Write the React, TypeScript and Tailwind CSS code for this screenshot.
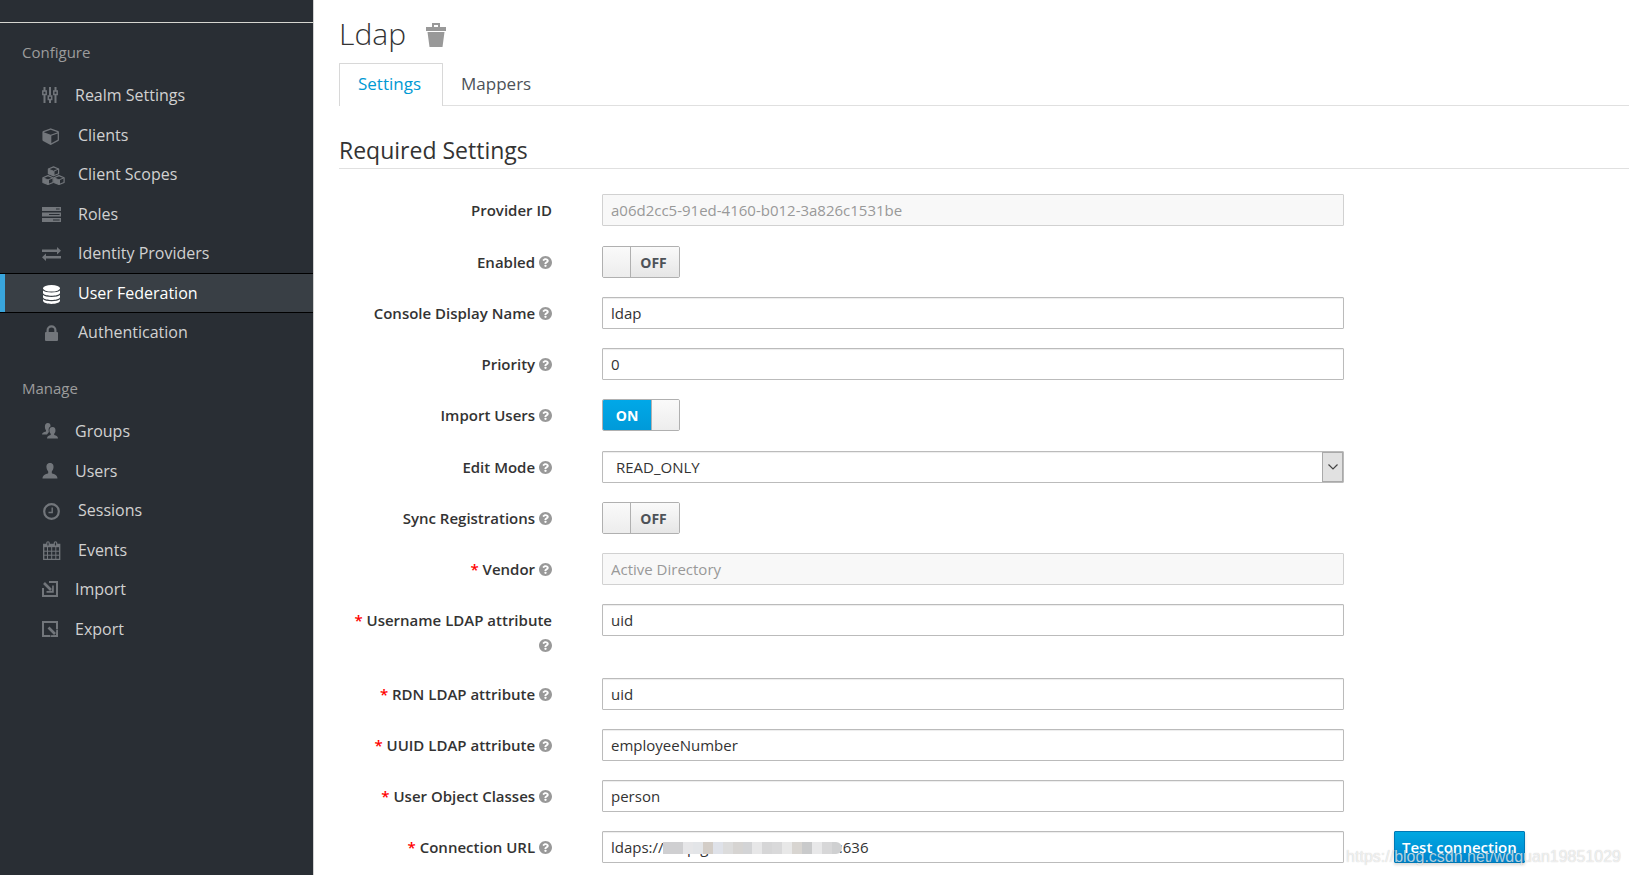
import { useState, type ReactNode } from 'react'
import clsx from 'clsx'
import { FaQuestionCircle } from 'react-icons/fa'

const icons: Record<string, ReactNode> = {
  sliders: (
    <svg width="16" height="16" viewBox="0 0 16 16" fill="none" stroke="currentColor" strokeWidth="2">
      <path d="M2.5 0v4M2.5 8v8M8 0v8.500M8 13v3M13.500 0v4M13.500 8v8" />
      <path strokeWidth="1.500" d="M.8 4h3.400v3.500H.8zM6.300 9h3.400v3.500H6.300zM11.800 4h3.400v3.500h-3.400z" />
    </svg>
  ),
  cube: (
    <svg width="18" height="18" viewBox="128 -10 1600 1812" fill="currentColor">
      <path d="M896 1629l640-349v-636l-640 233v752zM832 764l698-254-698-254-698 254zM1664 512v768q0 35-18 65t-49 47l-704 384q-28 16-61 16t-61-16l-704-384q-31-17-49-47t-18-65v-768q0-40 23-73t61-47l704-256q22-8 44-8t44 8l704 256q38 14 61 47t23 73z" transform="translate(64 0)" />
    </svg>
  ),
  cubes: (
    <svg width="23" height="19" viewBox="0 0 23 19" fill="currentColor" stroke="currentColor" strokeLinejoin="round">
      {['translate(5.500 0)', 'translate(0 8.700)', 'translate(11 8.700)'].map(t => (
        <g key={t} transform={t}>
          <path fill="none" strokeWidth="1.200" d="M.9 3 6 .9 11.100 3v4.800L6 9.800.9 7.800z" />
          <path stroke="none" d="M1 3.200 6 5.200v4.700L1 7.800zM6 5.200l1-.4v4.700l-1 .4z" />
          <path fill="none" strokeWidth="1" d="M1 3.100 6 5.200l5-2.100" />
        </g>
      ))}
    </svg>
  ),
  tasks: (
    <svg width="19" height="15" viewBox="0 0 19 15" fill="currentColor">
      <path fillRule="evenodd" d="M0 0h19v4H0zM14 1.400h3.600v1.200H14zM0 5.500h19v4H0zM7 6.900h10.600v1.200H7zM0 11h19v4H0zM11 12.400h6.600v1.200H11z" />
    </svg>
  ),
  exchange: (
    <svg width="19" height="14" viewBox="0 0 19 14" fill="currentColor">
      <path d="M0 2.500h15V0l4 3.800-4 3.700V5H0zM19 9H4V6.500L0 10.200 4 14v-2.500h15z" />
    </svg>
  ),
  database: (
    <svg width="19" height="19" viewBox="-1 0 19 19" fill="currentColor">
      <ellipse cx="8.500" cy="3.300" rx="8.500" ry="3.300" />
      <path d="M0 5.500c2 2.500 15 2.500 17 0V8c-1 3.700-16 3.700-17 0zM0 10c2 2.500 15 2.500 17 0v2.300c-1 3.700-16 3.700-17 0zM0 14.300c2 2.500 15 2.500 17 0v1.500c-1 4.200-16 4.200-17 0z" />
    </svg>
  ),
  lock: (
    <svg width="19" height="16" viewBox="0 0 19 16" fill="currentColor">
      <rect x="3" y="7" width="13" height="9" rx="1" />
      <path fill="none" stroke="currentColor" strokeWidth="2.200" d="M5.600 8V5.200a3.900 3.900 0 0 1 7.800 0V8" />
    </svg>
  ),
  groups: (
    <svg width="16" height="16" viewBox="0 0 16 16" fill="currentColor">
      <path d="M5.700 0C8 0 8.800 1.700 8.500 3.600 6.700 4.400 6.200 6.500 6.900 9L5 11.500H0c0-1.700 1.300-2.200 4-3V7.300C2.500 5.500 2.100 0 5.700 0z" />
      <path d="M10.400 4c2.600 0 3.400 2 3 4.400-.2 1-.6 1.700-1.200 2.300v1.200c2.500.8 3.800 1.600 3.800 3.600H5c0-2 1.200-2.800 3.700-3.600v-1.200C7 9.200 6.500 4 10.400 4z" />
    </svg>
  ),
  user: (
    <svg width="16" height="16" viewBox="0 0 16 16" fill="currentColor">
      <path d="M8 0c3.200 0 3.700 2.500 3.500 4.600-.2 1.700-.8 3-1.700 3.800v1.800c3 1.200 5.700 2 5.700 5.300H.5c0-3.300 2.700-4.100 5.700-5.300V8.400C5.300 7.600 4.700 6.300 4.500 4.600 4.300 2.500 4.800 0 8 0z" />
    </svg>
  ),
  clock: (
    <svg width="19" height="17" viewBox="0 0 19 17" fill="none" stroke="currentColor">
      <circle cx="9.500" cy="8.500" r="7.300" strokeWidth="2.200" />
      <path strokeWidth="1.400" d="M10.200 4.500v5H6.500" />
    </svg>
  ),
  calendar: (
    <svg width="19" height="19" viewBox="0 0 19 19" fill="none" stroke="currentColor">
      <path strokeWidth="1.300" d="M1.700 3.500h16v14.800h-16z" />
      <path strokeWidth="3" d="M1.500 4.700h16.300" />
      <path strokeWidth="1" d="M5.500 6v12M9.700 6v12M13.800 6v12M2 10.200h15.500M2 14.200h15.500" />
      <path strokeWidth="3.600" strokeLinecap="round" d="M6 2v2M13.500 2v2" />
      <path stroke="#292e34" strokeWidth="1.200" d="M6 1.500v3M13.500 1.500v3" />
    </svg>
  ),
  import: (
    <svg width="16" height="16" viewBox="0 0 16 16" fill="none" stroke="currentColor" strokeWidth="2">
      <path d="M7 1h8v14H1V7" />
      <path strokeWidth="2.600" d="M2 2l7 7" />
      <path fill="currentColor" stroke="none" d="M11.800 4.500v7.300H4.500V10l5.500-.2.200-5.300z" />
    </svg>
  ),
  export: (
    <svg width="16" height="16" viewBox="0 0 16 16" fill="none" stroke="currentColor" strokeWidth="2">
      <path d="M8 15H1V1h14v7" />
      <path strokeWidth="2.600" d="M6.500 6.500l6.500 6.500" />
      <path fill="currentColor" stroke="none" d="M16 8.500V16H8.500v-1.800l5.500-.2.200-5.500z" />
    </svg>
  ),
}

interface NavItem {
  label: string
  icon: string
  wide?: boolean
  active?: boolean
}

const configure: NavItem[] = [
  { label: 'Realm Settings', icon: 'sliders' },
  { label: 'Clients', icon: 'cube', wide: true },
  { label: 'Client Scopes', icon: 'cubes', wide: true },
  { label: 'Roles', icon: 'tasks', wide: true },
  { label: 'Identity Providers', icon: 'exchange', wide: true },
  { label: 'User Federation', icon: 'database', wide: true, active: true },
  { label: 'Authentication', icon: 'lock', wide: true },
]

const manage: NavItem[] = [
  { label: 'Groups', icon: 'groups' },
  { label: 'Users', icon: 'user' },
  { label: 'Sessions', icon: 'clock', wide: true },
  { label: 'Events', icon: 'calendar', wide: true },
  { label: 'Import', icon: 'import' },
  { label: 'Export', icon: 'export' },
]

function NavSection({ title, items }: { title: string; items: NavItem[] }) {
  return (
    <section className="mb-[7px]">
      <h2 className="px-[22px] pt-[19px] pb-[13px] text-[15px] leading-5 text-[#9c9c9c]">{title}</h2>
      <ul>
        {items.map(item => (
          <li key={item.label} className="odd:h-10 even:h-[39px]">
            <a
              href="#"
              className={clsx(
                'flex items-center text-base',
                item.active
                  ? 'h-10 border-y border-black bg-[#393f45] text-white shadow-[inset_5px_0_0_#39a5dc]'
                  : 'h-full text-[#d1d1d1]',
              )}
            >
              <span
                className={clsx(
                  'ml-[42px] shrink-0',
                  item.wide ? 'w-9 pt-0.5' : 'w-[33px]',
                  item.active ? 'text-white' : 'text-[#72767b]',
                )}
              >
                {icons[item.icon]}
              </span>
              {item.label}
            </a>
          </li>
        ))}
      </ul>
    </section>
  )
}

interface RowProps {
  id: string
  label: string
  required?: boolean
  help?: boolean
  children: ReactNode
  action?: ReactNode
}

function Row({ id, label, required, help = true, children, action }: RowProps) {
  return (
    <div className="grid grid-cols-[213fr_742fr_235fr] items-start gap-x-[50px] pb-[19px] [&:nth-child(4n+1)]:pb-5 last:pb-2!">
      <label htmlFor={id} className="pt-1 text-right text-[15px] leading-[25px] font-semibold text-[#333]">
        {required && <span className="text-[#f00]">* </span>}
        {label}
        {help && (
          <>
            {' '}
            <FaQuestionCircle viewBox="8 8 496 496" className="inline size-[13px] align-[-1px] text-[#999]" />
          </>
        )}
      </label>
      {children}
      {action}
    </div>
  )
}

const inputClass =
  'block w-full h-8 rounded-[1px] border border-[#bbb] bg-white px-2 text-[15px] leading-5 text-[#333] shadow-[inset_0_1px_1px_rgba(0,0,0,0.075)] outline-none disabled:border-[#d1d1d1] disabled:bg-[#f8f8f8] disabled:text-[#999] disabled:shadow-none'

function Field({ id, value, disabled }: { id: string; value: string; disabled?: boolean }) {
  return <input id={id} type="text" defaultValue={value} disabled={disabled} className={inputClass} />
}

function Toggle({ id, initial = false }: { id: string; initial?: boolean }) {
  const [on, setOn] = useState(initial)
  const knob = <span className="w-[27px] bg-linear-to-b from-[#fafafa] to-[#ededed]" />
  return (
    <span className="relative flex w-[78px] h-8 overflow-hidden rounded-[2px] border border-[#b0b0b0] text-[14px] font-bold">
      {!on && knob}
      <span
        className={clsx(
          'flex flex-1 items-center justify-center',
          on
            ? 'border-r border-[#b0b0b0] bg-linear-to-b from-[#00a8e8] to-[#009ad9] text-white'
            : 'border-l border-[#b0b0b0] bg-linear-to-b from-[#fafafa] to-[#e6e6e6] pr-[3px] text-[#4d5258]',
        )}
      >
        {on ? 'ON' : 'OFF'}
      </span>
      {on && knob}
      <input
        id={id}
        type="checkbox"
        checked={on}
        onChange={e => setOn(e.target.checked)}
        className="absolute inset-0 size-full opacity-0"
      />
    </span>
  )
}

const mask = [
  'bg-[#cfcfd1]', 'bg-[#cfcfd1]', 'bg-[#e6e6e8]', 'bg-[#e3e5e8]', 'bg-[#d3cdc7]', 'bg-[#dfe2e9]',
  'bg-[#dcdcdc]', 'bg-[#d6d4d2]', 'bg-[#d3d4d6]', 'bg-[#e7e7e8]', 'bg-[#d6d6d7]', 'bg-[#d9d9da]',
  'bg-[#e8e8e8]', 'bg-[#d8d5d1]', 'bg-[#c9cacb]', 'bg-[#e8e8e9]', 'bg-[#d7d7d8]', 'bg-[#cfd0d1]',
]

export default function App() {
  return (
    <div className="flex min-h-screen bg-white font-['Open_Sans',sans-serif] text-[#333]">
      <nav className="w-[314px] shrink-0 border-r border-[#d1d1d1] bg-[#292e34]">
        <div className="h-[23px] border-b border-[#d6d6d0]" />
        <NavSection title="Configure" items={configure} />
        <NavSection title="Manage" items={manage} />
      </nav>

      <main className="relative flex-1 min-w-0 pl-[25px]">
        <div className="flex items-center gap-5 pt-[14px]">
          <h1 className="text-[30px] leading-10 font-light">Ldap</h1>
          <button type="button" aria-label="Delete" className="pt-0.5 text-[#999]">
            <svg width="20" height="24" viewBox="0 0 20 24" fill="currentColor">
              <path fillRule="evenodd" d="M6 4V0h8v4h6v4H0V4zM8 4h4V2H8zM1.500 9h17L16.500 24h-13z" />
            </svg>
          </button>
        </div>

        <div className="mt-[9px] flex border-b border-[#e0e0e0] text-[17px]">
          <a
            href="#"
            className="-mb-px flex h-[43px] items-center rounded-t-[1px] border border-b-0 border-[#d8d8d8] bg-white pr-[21px] pl-[18px] pb-0.5 text-[#0099d3]"
          >
            Settings
          </a>
          <a href="#" className="-mb-px flex h-[43px] items-center border-t border-transparent px-[18px] pb-0.5 text-[#4d5258]">
            Mappers
          </a>
        </div>

        <form onSubmit={e => e.preventDefault()} className="pt-7">
          <fieldset>
            <legend className="mb-[25px] w-full border-b border-[#e0e0e0] pb-0.5 text-[23px] leading-8">
              Required Settings
            </legend>
            <div>
              <Row id="provider" label="Provider ID" help={false}>
                <Field id="provider" value="a06d2cc5-91ed-4160-b012-3a826c1531be" disabled />
              </Row>
              <Row id="enabled" label="Enabled">
                <Toggle id="enabled" />
              </Row>
              <Row id="name" label="Console Display Name">
                <Field id="name" value="ldap" />
              </Row>
              <Row id="priority" label="Priority">
                <Field id="priority" value="0" />
              </Row>
              <Row id="importUsers" label="Import Users">
                <Toggle id="importUsers" initial />
              </Row>
              <Row id="editMode" label="Edit Mode">
                <div className="relative">
                  <select id="editMode" className={clsx(inputClass, 'appearance-none pl-[13px]')}>
                    <option>READ_ONLY</option>
                    <option>WRITABLE</option>
                    <option>UNSYNCED</option>
                  </select>
                  <span className="pointer-events-none absolute inset-y-px right-px flex w-[21px] items-center justify-center border border-[#a9a9a9] bg-[#e1e1e1]">
                    <svg width="10" height="6" viewBox="0 0 10 6" fill="none" stroke="#444" strokeWidth="1.200">
                      <path d="M.5.5 5 5 9.500.5" />
                    </svg>
                  </span>
                </div>
              </Row>
              <Row id="sync" label="Sync Registrations">
                <Toggle id="sync" />
              </Row>
              <Row id="vendor" label="Vendor" required>
                <Field id="vendor" value="Active Directory" disabled />
              </Row>
              <Row id="username" label="Username LDAP attribute" required>
                <Field id="username" value="uid" />
              </Row>
              <Row id="rdn" label="RDN LDAP attribute" required>
                <Field id="rdn" value="uid" />
              </Row>
              <Row id="uuid" label="UUID LDAP attribute" required>
                <Field id="uuid" value="employeeNumber" />
              </Row>
              <Row id="classes" label="User Object Classes" required>
                <Field id="classes" value="person" />
              </Row>
              <Row
                id="url"
                label="Connection URL"
                required
                action={
                  <button
                    type="button"
                    className="h-8 justify-self-start rounded-[1px] border border-[#0079b5] bg-linear-to-b from-[#00a8e1] to-[#0085cf] px-[7px] text-[15px] leading-5 font-semibold whitespace-nowrap text-white shadow-[0_2px_3px_rgba(0,0,0,0.15)]"
                  >
                    Test connection
                  </button>
                }
              >
                <div className="relative">
                  <Field id="url" value="ldaps://xxxp.gxxxxxxxxxxxxxxxx-:636" />
                  <span className="absolute top-[11px] left-[61px] flex h-3 w-[179px] overflow-hidden rounded-l-[4px] rounded-r-full">
                    {mask.map((tone, i) => (
                      <span key={i} className={clsx('flex-1', tone)} />
                    ))}
                  </span>
                </div>
              </Row>
            </div>
          </fieldset>
        </form>

        <span className="pointer-events-none absolute right-2 bottom-2 font-['Liberation_Sans',sans-serif] text-[16px] leading-5 text-white/70 [text-shadow:0_0_1px_rgba(0,0,0,0.25)]">
          https://blog.csdn.net/wdquan19851029
        </span>
      </main>
    </div>
  )
}
